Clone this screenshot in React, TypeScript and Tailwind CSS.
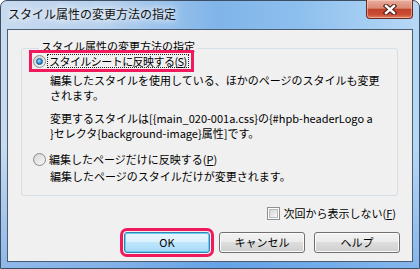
import React from "react";

function Radio({ checked }: { checked?: boolean }) {
  return (
    <span className="flex h-[13px] w-[13px] shrink-0 items-center justify-center rounded-full border border-[#8a8c8e] bg-[linear-gradient(135deg,#cfd1d3_0%,#f6f6f6_100%)]">
      {checked ? (
        <span className="h-[7px] w-[7px] rounded-full border border-[#1c4f86] bg-[radial-gradient(circle_at_40%_35%,#9fe0ff_0%,#2f8fdb_55%,#1b5fa8_100%)]" />
      ) : (
        <span className="h-[9px] w-[9px] rounded-full bg-[linear-gradient(135deg,#d9dadb_0%,#f4f4f4_100%)]" />
      )}
    </span>
  );
}

function Checkbox() {
  return (
    <span className="flex h-[13px] w-[13px] shrink-0 items-center justify-center border border-[#8e8f8f] bg-white">
      <span className="h-[9px] w-[9px] border border-[#b8babc] bg-[linear-gradient(135deg,#d4d5d6_0%,#f7f7f7_100%)]" />
    </span>
  );
}

function Button({ label, focused }: { label: string; focused?: boolean }) {
  return (
    <button
      className={
        focused
          ? "h-[21px] w-[86px] rounded-[3px] border border-[#3c7fb1] bg-[linear-gradient(180deg,#eaf6fd_0%,#d9f0fc_50%,#bee6fd_50%,#a7d9f5_100%)] text-[11px] font-normal leading-none shadow-[inset_0_0_0_1px_#5fd2f6] outline-3 outline-offset-[1px] outline-[#f0195c]"
          : "h-[21px] w-[86px] rounded-[3px] border border-[#707070] bg-[linear-gradient(180deg,#f2f2f2_0%,#ebebeb_50%,#dddddd_50%,#cfcfcf_100%)] text-[11px] font-normal leading-none shadow-[inset_0_0_0_1px_#fbfbfb]"
      }
    >
      {label}
    </button>
  );
}

export default function App() {
  return (
    <div className="h-[269px] w-[420px] font-['Noto_Sans_CJK_JP',sans-serif] text-[11px] text-black">
      <div className="flex h-full flex-col rounded-t-[7px] border border-[#3d4e62] bg-[linear-gradient(180deg,rgba(255,255,255,0)_55%,rgba(70,140,225,0.45)_100%),linear-gradient(90deg,#c8dbef_0%,#b6d0ed_25%,#7fb5e9_52%,#8ec0ee_72%,#b7d8f6_100%)] px-[6px] pb-[6px]">
        {/* title bar */}
        <div className="flex h-[28px] items-start justify-between">
          <span className="ml-[1px] mt-[5px] text-[12px] leading-[16px] text-[#111] [text-shadow:0_0_6px_#fff,0_0_10px_#fff]">
            スタイル属性の変更方法の指定
          </span>
          <div className="-mt-[1px] flex h-[19px] w-[47px] items-center justify-center rounded-b-[4px] border border-t-0 border-[#6b2a20] bg-[linear-gradient(180deg,#e9ad9d_0%,#db8a74_45%,#c2432c_52%,#c94b31_80%,#e0805f_100%)] shadow-[inset_0_0_0_1px_rgba(255,220,210,0.5)]">
            <svg width="14" height="11" viewBox="0 0 14 11">
              <path d="M3 2 L11 9 M11 2 L3 9" stroke="#4a1a14" strokeWidth="4.4" strokeLinecap="square" />
              <path d="M3 2 L11 9 M11 2 L3 9" stroke="#ffffff" strokeWidth="2.4" strokeLinecap="square" />
            </svg>
          </div>
        </div>

        {/* client area */}
        <div className="flex flex-1 flex-col border border-[#4b5d73] bg-[#f0f0f0]">
          <fieldset className="ml-[13px] mr-[14px] mt-[11px] rounded-[3px] border border-[#d5dfe5] pb-[11px] pl-[10px]">
            <legend className="ml-[7px] px-[2px] pb-[4px] leading-[10px]">スタイル属性の変更方法の指定</legend>

            <div className="-mt-[2px] flex h-[16px] w-fit items-center pl-[1px] pr-[2px] outline-3 outline-[#f0195c]">
              <Radio checked />
              <span className="ml-[1px] border border-dotted border-[#222] px-[1px] leading-[12px] tracking-[-0.55px]">
                スタイルシートに反映する(<span className="underline">S</span>)
              </span>
            </div>

            <div className="mt-[4px] pl-[18px] leading-[15px]">
              編集したスタイルを使用している、ほかのページのスタイルも変更
              <br />
              されます。
            </div>

            <div className="mt-[8px] whitespace-nowrap pl-[18px] leading-[15px]">
              変更するスタイルは[{"{"}main_020-001a.css{"}"}の{"{"}#hpb-headerLogo a
              <br />
              {"}"}セレクタ{"{"}background-image{"}"}属性]です。
            </div>

            <div className="mt-[10px] flex h-[16px] items-center pl-[1px]">
              <Radio />
              <span className="ml-[1px] border border-transparent px-[1px] leading-[12px]">
                編集したページだけに反映する(<span className="underline">P</span>)
              </span>
            </div>

            <div className="mt-[2px] pl-[18px] leading-[15px]">編集したページのスタイルだけが変更されます。</div>
          </fieldset>

          <div className="mr-[16px] mt-[9px] flex h-[16px] items-center gap-[3px] self-end">
            <Checkbox />
            <span>
              次回から表示しない(<span className="underline">F</span>)
            </span>
          </div>

          <div className="mt-[11px] flex justify-end gap-[9px] pr-[12px]">
            <Button label="OK" focused />
            <Button label="キャンセル" />
            <Button label="ヘルプ" />
          </div>
        </div>
      </div>
    </div>
  );
}
